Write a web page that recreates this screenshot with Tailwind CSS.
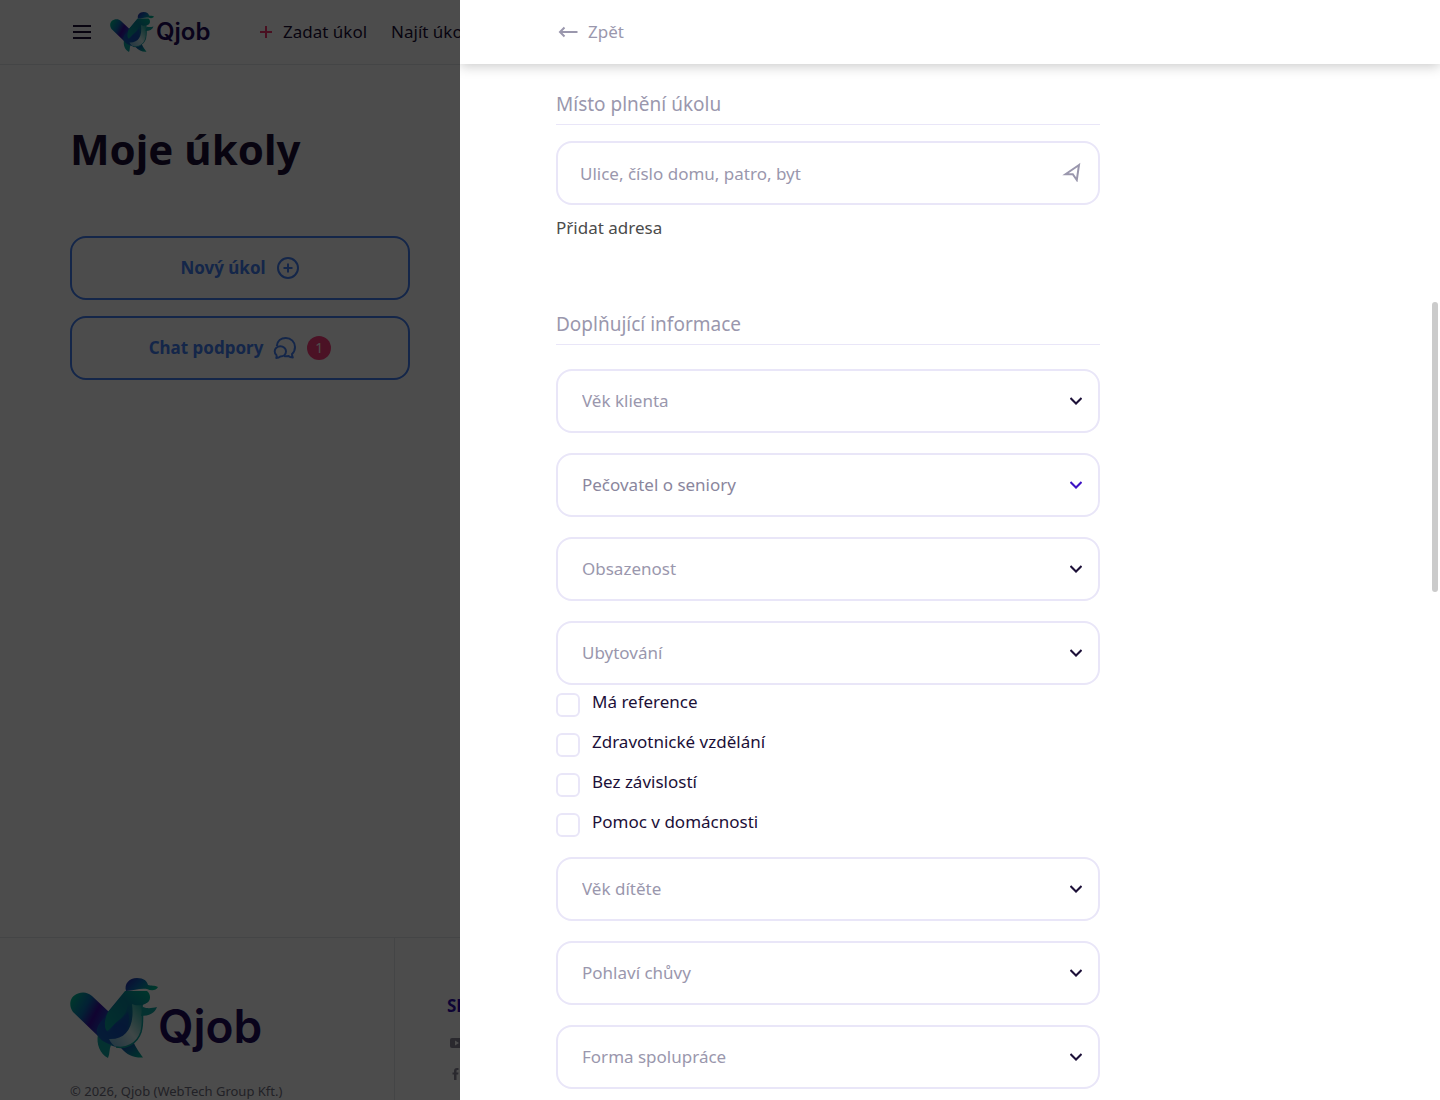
<!DOCTYPE html>
<html lang="cs">
<head>
    <meta charset="UTF-8">
    <meta name="viewport" content="width=device-width, initial-scale=1.0">
    <title>Moje úkoly - Qjob</title>
    <script src="https://cdn.jsdelivr.net/npm/@tailwindcss/browser@4"></script>
</head>
<body class="h-screen overflow-hidden bg-white font-['Noto_Sans',sans-serif] text-[17px] leading-6 text-[#1c1038]">

    <!-- Shared icons -->
    <svg class="absolute w-0 h-0" aria-hidden="true">
        <defs>
            <linearGradient id="tail" x1="0" y1="0.2" x2="1" y2="0.8">
                <stop offset="0" stop-color="#00b894"/>
                <stop offset="0.35" stop-color="#0b6fb0"/>
                <stop offset="0.6" stop-color="#3a0ca3"/>
                <stop offset="1" stop-color="#1560c8"/>
            </linearGradient>
            <linearGradient id="torso" x1="1" y1="0" x2="0.2" y2="1">
                <stop offset="0" stop-color="#00b894"/>
                <stop offset="0.35" stop-color="#087f9c"/>
                <stop offset="0.7" stop-color="#1450b8"/>
                <stop offset="1" stop-color="#0f8bb5"/>
            </linearGradient>
            <linearGradient id="cap" x1="0" y1="0" x2="1" y2="0.4">
                <stop offset="0" stop-color="#2a1ca8"/>
                <stop offset="0.5" stop-color="#0f69b8"/>
                <stop offset="1" stop-color="#00b894"/>
            </linearGradient>
            <linearGradient id="belly" x1="1" y1="0" x2="0" y2="1">
                <stop offset="0" stop-color="#12a89c"/>
                <stop offset="0.5" stop-color="#d2eeee"/>
                <stop offset="1" stop-color="#6cb4dc"/>
            </linearGradient>
            <linearGradient id="arm" x1="1" y1="0" x2="0" y2="1">
                <stop offset="0" stop-color="#087f9c"/>
                <stop offset="1" stop-color="#08a39c"/>
            </linearGradient>
            <linearGradient id="foot" x1="0" y1="0" x2="1" y2="1">
                <stop offset="0" stop-color="#1b2fb0"/>
                <stop offset="1" stop-color="#00b894"/>
            </linearGradient>
        </defs>
        <symbol id="bird" viewBox="0 0 88 80">
            <path fill="url(#tail)" d="M3 34C-2 27 0 18 8 15.500C14 13.500 18 15 22 18L39 34L28 58Z"/>
            <path fill="#10a5a0" d="M28 56C26 66 30 76 38 80C40 76 39 71 41 67Z"/>
            <path fill="url(#foot)" d="M51 70C57 77 64 80 73 79.500C69 74 66 70 63 63Z"/>
            <path fill="url(#torso)" d="M55 13L77 13C80 15 81 20 79 23C77 26 73 26 72 28C73 36 73 47 71 54C67 66 56 71 46 69C34 66 26 57 27 52C28 45 34 42 37 35Z"/>
            <path fill="#1450b8" opacity="0.7" d="M27 56C27 48 31 43 36 39C34 47 35 53 38 54C47 50 53 40 58 34C61 45 57 58 40 66C33 64 29 61 27 56Z"/>
            <path fill="url(#arm)" d="M38 34C34 42 34 50 37 53C41 51 43 47 48 43C54 38 57 34 58 26L52 18Z"/>
            <path fill="url(#belly)" d="M62 26C66 28 69 27 72 27C73 39 73 47 71 54C67 66 56 71 46 69C43 67 41 65 39 61C56 62 65 49 62 26Z"/>
            <path fill="none" stroke="#10a5a0" stroke-width="1.500" d="M72 27C73 39 73 47 71 54C67 66 56 71 46 69"/>
            <path fill="url(#cap)" d="M56 13C54 6 59 0 67 0C74 0 77 3 78 7C81 8 85 7 88 9C86 13 81 13 77 11C69 10 64 13 56 13Z"/>
            <path fill="#10a5a0" d="M73 29C78 31 82 30 87 29C85 35 79 38 71 38Z"/>
        </symbol>
        <symbol id="chevron" viewBox="0 0 12 8">
            <path d="M0.500 1l5.500 5.500L11.500 1" fill="none" stroke="currentColor" stroke-width="2"/>
        </symbol>
    </svg>

    <!-- Page -->
    <div class="flex flex-col h-full">
        <header class="flex items-center shrink-0 h-[65px] pl-[72px] border-b border-gray-200">
            <button type="button" aria-label="Menu" class="flex flex-col gap-1 w-5 px-px">
                <span class="h-[2px] bg-[#1c1038]"></span>
                <span class="h-[2px] bg-[#1c1038]"></span>
                <span class="h-[2px] bg-[#1c1038]"></span>
            </button>
            <a href="#" class="flex items-center gap-[2px] w-[103px] ml-[18px] font-['Inter',sans-serif] text-2xl leading-6 font-semibold text-[#1f0a5c]">
                <svg class="shrink-0 w-11 h-10"><use href="#bird"/></svg>
                Qjob
            </a>
            <nav class="flex gap-6 ml-[47px] whitespace-nowrap">
                <a href="#" class="flex items-center gap-[11px]">
                    <svg class="w-3 h-3" viewBox="0 0 12 12"><path d="M6 0v12M0 6h12" stroke="#f3366f" stroke-width="2"/></svg>
                    Zadat úkol
                </a>
                <a href="#">Najít úkol</a>
            </nav>
        </header>

        <main class="flex-1 min-h-0 px-[70px] pt-[52px]">
            <h1 class="text-[42px] leading-[64px] font-bold">Moje úkoly</h1>
            <div class="flex flex-col gap-4 w-[340px] mt-[55px] font-bold text-[#4480f5]">
                <button type="button" class="flex items-center justify-center gap-[10px] h-16 border-2 border-current rounded-2xl">
                    Nový úkol
                    <svg class="w-6 h-6" viewBox="0 0 24 24" fill="none" stroke="currentColor" stroke-width="2">
                        <circle cx="12" cy="12" r="10"/>
                        <path d="M12 7.500v9M7.500 12h9"/>
                    </svg>
                </button>
                <button type="button" class="flex items-center justify-center gap-[10px] h-16 border-2 border-current rounded-2xl">
                    Chat podpory
                    <svg class="w-6 h-6" viewBox="0 0 24 24" fill="none" stroke="currentColor" stroke-width="2" stroke-linejoin="round">
                        <path d="M3.800 10C4.300 5 8 2 12.800 2C18 2 22 6 22 11C22 14 20.800 16.500 19 18C19 19.500 19.300 20.500 19.800 21.500C18 21.500 16.500 21 15.500 20C14 20.400 12.500 20.400 11 20"/>
                        <path d="M7.300 10.200C10.500 10.200 13 12.500 13 15.300C13 18.500 10.500 20.500 7.300 20.500C6.300 21.500 5 22 3.300 22C3.800 21 3.800 20 3.400 19C2 18 1.700 16.800 1.700 15.300C1.700 12.500 4.200 10.200 7.300 10.200Z"/>
                    </svg>
                    <span class="flex items-center justify-center w-6 h-6 rounded-full bg-[#fa3f7c] text-white text-sm font-normal">1</span>
                </button>
            </div>
        </main>

        <footer class="flex shrink-0 h-[163px] border-t border-gray-200 overflow-hidden">
            <div class="w-[395px] pl-[70px] pt-10 border-r border-gray-200">
                <div class="flex items-center font-['Inter',sans-serif] text-[46px] leading-none font-semibold text-[#1f0a5c]">
                    <svg class="shrink-0 w-[88px] h-20"><use href="#bird"/></svg>
                    <span class="pt-4">Qjob</span>
                </div>
                <p class="mt-6 text-[13px] leading-[18px] text-[#716f80]">© 2026, Qjob (WebTech Group Kft.)</p>
            </div>
            <div class="pl-[52px] pt-14">
                <h2 class="leading-6 font-bold text-[#2f0db0]">SLEDUJTE NÁS</h2>
                <div class="flex flex-col gap-5 pl-[3px] pt-5 text-[#8c8a9c]">
                    <a href="#" aria-label="YouTube"><svg class="w-[14px] h-[10px]" viewBox="0 0 14 10"><rect width="14" height="10" rx="2" fill="currentColor"/><path d="M5 2.500v5l4-2.500z" fill="#fff"/></svg></a>
                    <a href="#" aria-label="Facebook"><svg class="w-[14px] h-3" viewBox="0 0 14 12"><path d="M4 12V6.500H2.500V4.500H4V3C4 1 5 0 7 0H8.500V2H7.500C6.800 2 6.500 2.300 6.500 3V4.500H8.500L8.200 6.500H6.500V12Z" fill="currentColor"/></svg></a>
                </div>
            </div>
        </footer>
    </div>

    <!-- Overlay -->
    <div class="fixed inset-0 bg-black/70"></div>

    <!-- Drawer -->
    <aside class="fixed inset-y-0 right-0 flex flex-col w-[980px] max-w-full bg-white overflow-hidden">
        <div class="relative flex items-center shrink-0 h-16 px-24 shadow-[0_2px_12px_rgba(0,0,0,0.22)]">
            <button type="button" class="flex items-center gap-[10px] pl-[2px] text-[#9a97ad]">
                <svg class="w-5 h-3" viewBox="0 0 20 12" fill="none" stroke="currentColor" stroke-width="2"><path d="M19.500 6H3M6.500 1.500L2 6l4.500 4.500"/></svg>
                Zpět
            </button>
        </div>

        <form class="w-full max-w-[736px] px-24 pt-6">
            <h2 class="h-[37px] leading-8 text-[19px] text-[#9a97ad] border-b border-[#e9e6f8]">Místo plnění úkolu</h2>
            <div class="relative mt-4">
                <input type="text" aria-label="Místo plnění úkolu" placeholder="Ulice, číslo domu, patro, byt" class="block w-full h-16 pl-[22px] pr-12 border-2 border-[#e9e6f8] rounded-2xl placeholder:text-[#9a97ad]">
                <svg class="absolute right-[18px] top-[21px] w-5 h-5" viewBox="0 0 20 20" fill="none" stroke="#9a97ad" stroke-width="2"><path d="M17 3L3.500 12.300L10.800 12.300L14.800 18Z"/></svg>
            </div>
            <button type="button" class="block mt-[11px] leading-6 text-[#4b4b4b]">Přidat adresa</button>

            <h2 class="h-[37px] mt-[68px] leading-8 text-[19px] text-[#9a97ad] border-b border-[#e9e6f8]">Doplňující informace</h2>
            <div class="flex flex-col gap-5 mt-6">
                <div class="relative">
                    <select aria-label="Věk klienta" class="block w-full h-16 px-6 border-2 border-[#e9e6f8] rounded-2xl appearance-none bg-white text-[#9a97ad]"><option>Věk klienta</option></select>
                    <svg class="absolute right-[18px] top-7 w-3 h-2 pointer-events-none"><use href="#chevron"/></svg>
                </div>
                <div class="relative">
                    <select aria-label="Pečovatel o seniory" class="block w-full h-16 px-6 border-2 border-[#e9e6f8] rounded-2xl appearance-none bg-white text-[#8a869d]"><option>Pečovatel o seniory</option></select>
                    <svg class="absolute right-[18px] top-7 w-3 h-2 pointer-events-none text-[#3d12c4]"><use href="#chevron"/></svg>
                </div>
                <div class="relative">
                    <select aria-label="Obsazenost" class="block w-full h-16 px-6 border-2 border-[#e9e6f8] rounded-2xl appearance-none bg-white text-[#9a97ad]"><option>Obsazenost</option></select>
                    <svg class="absolute right-[18px] top-7 w-3 h-2 pointer-events-none"><use href="#chevron"/></svg>
                </div>
                <div class="relative">
                    <select aria-label="Ubytování" class="block w-full h-16 px-6 border-2 border-[#e9e6f8] rounded-2xl appearance-none bg-white text-[#9a97ad]"><option>Ubytování</option></select>
                    <svg class="absolute right-[18px] top-7 w-3 h-2 pointer-events-none"><use href="#chevron"/></svg>
                </div>
            </div>

            <div class="flex flex-col items-start gap-4 my-2 pb-3">
                <label class="flex gap-3 h-6 leading-[18px]"><input type="checkbox" class="appearance-none w-6 h-6 border-2 border-[#e9e6f8] rounded-md checked:bg-[#3d12c4]">Má reference</label>
                <label class="flex gap-3 h-6 leading-[18px]"><input type="checkbox" class="appearance-none w-6 h-6 border-2 border-[#e9e6f8] rounded-md checked:bg-[#3d12c4]">Zdravotnické vzdělání</label>
                <label class="flex gap-3 h-6 leading-[18px]"><input type="checkbox" class="appearance-none w-6 h-6 border-2 border-[#e9e6f8] rounded-md checked:bg-[#3d12c4]">Bez závislostí</label>
                <label class="flex gap-3 h-6 leading-[18px]"><input type="checkbox" class="appearance-none w-6 h-6 border-2 border-[#e9e6f8] rounded-md checked:bg-[#3d12c4]">Pomoc v domácnosti</label>
            </div>

            <div class="flex flex-col gap-5">
                <div class="relative">
                    <select aria-label="Věk dítěte" class="block w-full h-16 px-6 border-2 border-[#e9e6f8] rounded-2xl appearance-none bg-white text-[#9a97ad]"><option>Věk dítěte</option></select>
                    <svg class="absolute right-[18px] top-7 w-3 h-2 pointer-events-none"><use href="#chevron"/></svg>
                </div>
                <div class="relative">
                    <select aria-label="Pohlaví chůvy" class="block w-full h-16 px-6 border-2 border-[#e9e6f8] rounded-2xl appearance-none bg-white text-[#9a97ad]"><option>Pohlaví chůvy</option></select>
                    <svg class="absolute right-[18px] top-7 w-3 h-2 pointer-events-none"><use href="#chevron"/></svg>
                </div>
                <div class="relative">
                    <select aria-label="Forma spolupráce" class="block w-full h-16 px-6 border-2 border-[#e9e6f8] rounded-2xl appearance-none bg-white text-[#9a97ad]"><option>Forma spolupráce</option></select>
                    <svg class="absolute right-[18px] top-7 w-3 h-2 pointer-events-none"><use href="#chevron"/></svg>
                </div>
            </div>
        </form>

        <!-- Scroll thumb -->
        <div class="absolute right-[2px] top-[302px] w-[6px] h-[290px] rounded-full bg-[#cbcbcb]"></div>
    </aside>
</body>
</html>
